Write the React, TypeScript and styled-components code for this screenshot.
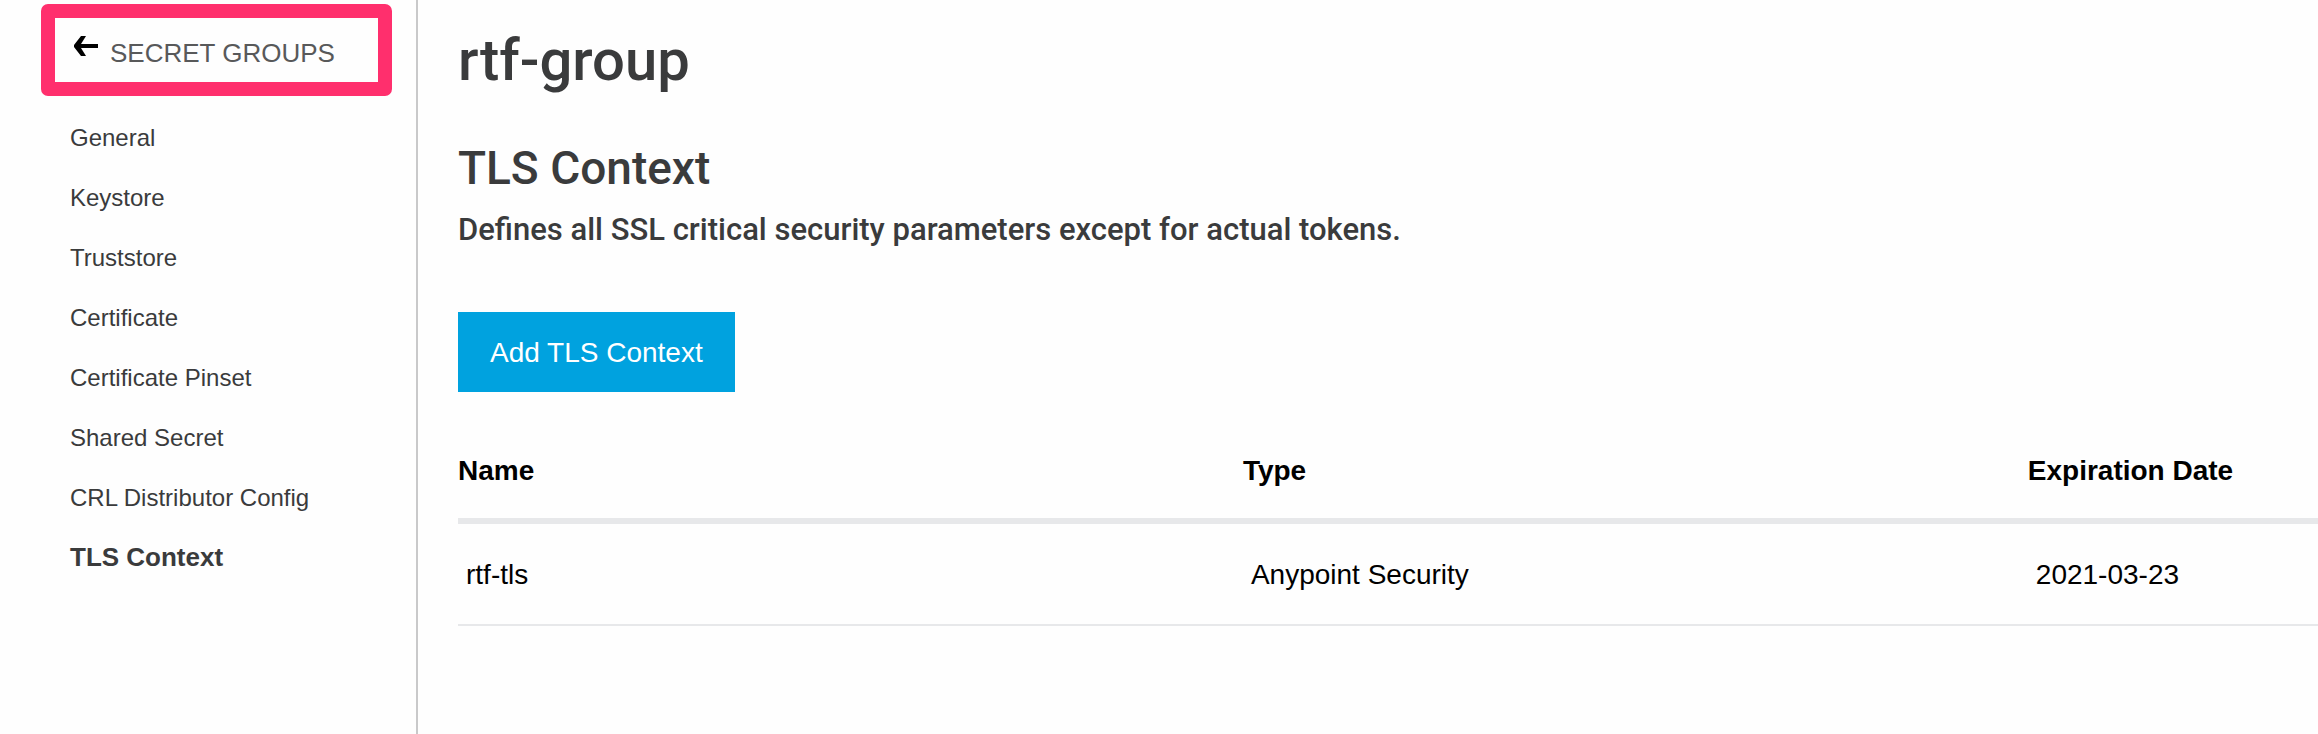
import React from "react";
import styled, { createGlobalStyle } from "styled-components";

const GlobalStyle = createGlobalStyle`
  *, *::before, *::after { box-sizing: border-box; }
  body {
    margin: 0;
    background: #fefefe;
    color: #000;
    font-family: "Liberation Sans", Arial, Helvetica, sans-serif;
    overflow-x: hidden;
  }
`;

const Page = styled.div`
  display: flex;
  min-height: 100vh;
`;

const Sidebar = styled.aside`
  flex: 0 0 418px;
  padding: 4px 24px 40px 41px;
  border-right: 2px solid #c9c9ca;
`;

const BackLink = styled.a`
  display: flex;
  align-items: flex-start;
  gap: 12px;
  height: 92px;
  padding: 18px 19px;
  border: 14px solid #ff2f6d;
  border-radius: 7px;
  color: #58595a;
  font-size: 26px;
  line-height: 34px;
  text-decoration: none;
  white-space: nowrap;
`;

const BackArrow = styled.svg`
  flex: none;
  display: block;
  width: 24px;
  height: 20px;
`;

const NavList = styled.ul`
  margin: 12px 0 0;
  padding: 0 0 0 29px;
  list-style: none;
`;

const NavLink = styled.a<{ $active?: boolean }>`
  display: block;
  color: #3a3b3c;
  font-size: ${(p) => (p.$active ? 26 : 24)}px;
  font-weight: ${(p) => (p.$active ? 700 : 400)};
  line-height: ${(p) => (p.$active ? 58 : 60)}px;
  text-decoration: none;
  white-space: nowrap;
`;

const Main = styled.main`
  flex: 1;
  min-width: 0;
  padding: 28px 0 40px 40px;
`;

const Heading = styled.h1`
  margin: 0;
  color: #3a3b3c;
  font: 500 58px/64px Roboto, sans-serif;
`;

const Subheading = styled.h2`
  margin: 44px 0 0;
  color: #3a3b3c;
  font: 500 46px/64px Roboto, sans-serif;
`;

const Description = styled.p`
  margin: 10px 0 0;
  color: #3a3b3c;
  font: 500 31px/40px Roboto, sans-serif;
`;

const AddButton = styled.button`
  display: block;
  height: 80px;
  margin: 62px 0 0;
  padding: 2px 32px 0;
  border: 0;
  background: #00a2df;
  color: #fff;
  font: 400 28px/32px "Liberation Sans", Arial, sans-serif;
  cursor: pointer;
`;

const Table = styled.table`
  width: 100%;
  margin-top: 36px;
  border-collapse: separate;
  border-spacing: 0;
  table-layout: fixed;
  font-size: 28px;
  line-height: 32px;
  text-align: left;
`;

const HeaderCell = styled.th<{ $share?: number }>`
  width: ${(p) => (p.$share ? `${p.$share}%` : "auto")};
  height: 96px;
  padding: 8px 0 12px;
  border-bottom: 6px solid #e7e8ea;
  font-weight: 700;
  white-space: nowrap;
`;

const Cell = styled.td`
  height: 102px;
  padding: 2px 8px 0;
  border-bottom: 2px solid #e7e8ea;
  white-space: nowrap;
`;

const navItems = [
  "General",
  "Keystore",
  "Truststore",
  "Certificate",
  "Certificate Pinset",
  "Shared Secret",
  "CRL Distributor Config",
  "TLS Context",
];

const contexts = [
  { name: "rtf-tls", type: "Anypoint Security", expires: "2021-03-23" },
];

export default function App() {
  return (
    <>
      <GlobalStyle />
      <Page>
        <Sidebar>
          <BackLink href="#groups">
            <BackArrow viewBox="0 0 24 20" aria-hidden="true">
              <path d="M7 0h5L7 8h17v4H7l5 8H7L0 11V9z" fill="#000" />
            </BackArrow>
            SECRET GROUPS
          </BackLink>
          <nav>
            <NavList>
              {navItems.map((item) => (
                <li key={item}>
                  <NavLink href="#section" $active={item === "TLS Context"}>
                    {item}
                  </NavLink>
                </li>
              ))}
            </NavList>
          </nav>
        </Sidebar>
        <Main>
          <Heading>rtf-group</Heading>
          <Subheading>TLS Context</Subheading>
          <Description>
            Defines all SSL critical security parameters except for actual tokens.
          </Description>
          <AddButton type="button">Add TLS Context</AddButton>
          <Table>
            <thead>
              <tr>
                <HeaderCell scope="col" $share={42.2}>Name</HeaderCell>
                <HeaderCell scope="col" $share={42.2}>Type</HeaderCell>
                <HeaderCell scope="col">Expiration Date</HeaderCell>
              </tr>
            </thead>
            <tbody>
              {contexts.map((c) => (
                <tr key={c.name}>
                  <Cell>{c.name}</Cell>
                  <Cell>{c.type}</Cell>
                  <Cell>{c.expires}</Cell>
                </tr>
              ))}
            </tbody>
          </Table>
        </Main>
      </Page>
    </>
  );
}
